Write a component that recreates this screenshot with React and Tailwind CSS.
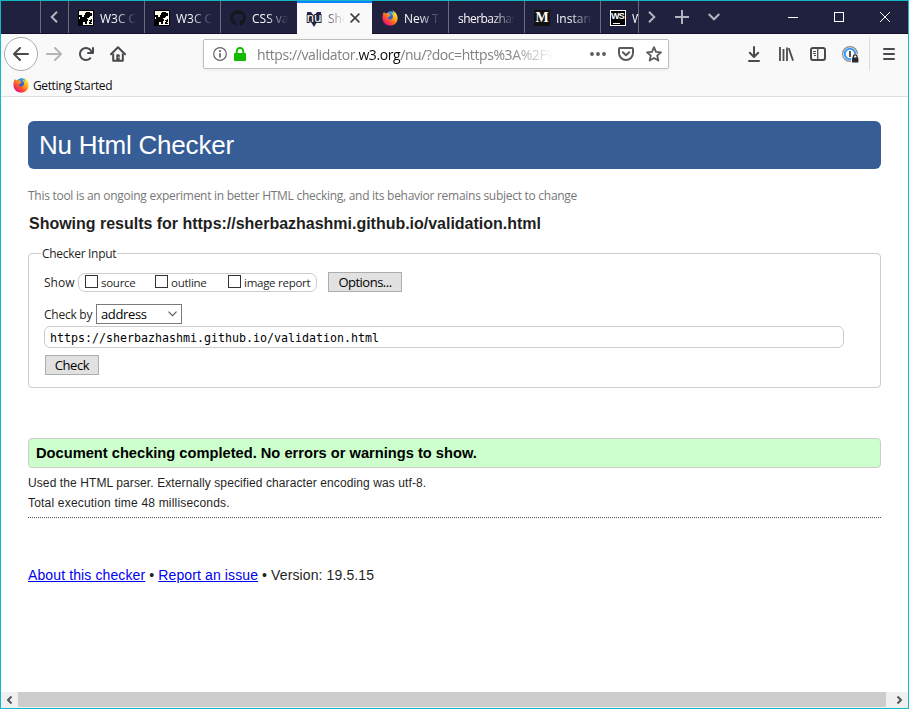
import React from "react";
import { FaGithub } from "react-icons/fa";

const UI = "font-['Open_Sans','Noto_Sans',sans-serif]";

function FirefoxLogo({ id }) {
  return (
    <svg width="16" height="16" viewBox="0 0 16 16" className="shrink-0">
      <defs>
        <linearGradient id={id} x1="0.9" y1="0.1" x2="0.2" y2="0.9">
          <stop offset="0" stopColor="#fff14a" />
          <stop offset="0.35" stopColor="#ffb01c" />
          <stop offset="0.65" stopColor="#ff5a2a" />
          <stop offset="1" stopColor="#e8107a" />
        </linearGradient>
      </defs>
      <circle cx="8.3" cy="7.6" r="6" fill="#2f5fd6" />
      <path d="M7 1.5C9 .8 12 2 13 4L10 5 7 4z" fill="#1d9bf5" />
      <path
        fill={`url(#${id})`}
        d="M1.2 3.2 2.2 1.8C2.4 2.8 2.8 3.2 3.4 3.5 4.2 3.2 5 3.3 5.6 3.6 6 2.9 6.6 2.5 7.3 2.3 6.7 3.2 6.8 4.2 7.3 4.6L8.8 4.9C8.8 5.6 8 5.9 7.5 6.2 7.2 6.8 6.5 7 6 7.2 5.9 8.8 7.2 9.8 8.6 9.5 10.6 9.2 11.2 7.4 10.8 5.6 10.4 4 9.8 3 9.2 2.4 10.6 2.6 11.4 3.4 12 4.2 11.8 2.6 11 1.4 10 .6 12.8 1.2 15.6 4.4 15.6 8.2 15.6 12.4 12.4 15.6 8.2 15.6 4 15.6.6 12.4.5 8.2.4 6.2.8 4.6 1.2 3.2z"
      />
    </svg>
  );
}

function W3CIcon() {
  return (
    <svg width="16" height="16" viewBox="0 0 16 16" className="shrink-0" shapeRendering="crispEdges">
      <rect width="16" height="16" fill="#000" />
      <rect x="1" y="1" width="14" height="14" fill="#fdfbf0" />
      <path
        fill="#000"
        d="M1 5h3v2h2V5h1V3h1V2h4v1h2v3h-2v1h-1v1H9v1h1v2H9v3H7v-2H5v3H1V9h1V7H1zM11 10h2v-1h1v3h-1v1h1v1h-3v-2h1v-1h-1z"
      />
    </svg>
  );
}

function Label({ children, className = "" }) {
  return (
    <span
      className={`ml-[6px] w-[37px] shrink-0 overflow-hidden whitespace-nowrap pt-px text-[12px] leading-[16px] [mask-image:linear-gradient(to_right,black_40%,transparent_98%)] ${className}`}
    >
      {children}
    </span>
  );
}

function Tab({ children, className = "" }) {
  return <div className={`flex h-full shrink-0 items-center overflow-hidden pt-[2px] ${className}`}>{children}</div>;
}

function TabStrip() {
  const sep = "border-l border-[#6b6b7e]";
  return (
    <div className="flex h-[33px] shrink-0 items-center border-b border-[#1a0f2c] bg-[#20213f] text-[#f9f9fa]">
      <div className="w-[39px] shrink-0" />
      <div className={`flex h-full w-[28px] shrink-0 items-center justify-center pr-px ${sep}`}>
        <svg width="8" height="12" viewBox="0 0 8 12" fill="none" stroke="#b4b4bf" strokeWidth="2">
          <path d="M7 .7 1.7 6 7 11.3" />
        </svg>
      </div>
      <Tab className={`w-[76px] pl-[9px] ${sep}`}><W3CIcon /><Label>W3C CSS</Label></Tab>
      <Tab className={`w-[76px] pl-[9px] ${sep}`}><W3CIcon /><Label>W3C CSS</Label></Tab>
      <Tab className={`w-[77px] pl-[9px] ${sep}`}>
        <FaGithub size={16} color="#15161c" className="shrink-0" />
        <Label>CSS valid</Label>
      </Tab>
      <div className="flex h-[33px] w-[75px] shrink-0 items-center self-start border-t-2 border-[#0a84ff] bg-[#f9f9fa] pl-[9px]">
        <svg width="16" height="16" viewBox="0 0 16 16" className="shrink-0">
          <path d="M1 1h4l3 4 3-4h4v8l-4 2-3 5-3-5-4-2z" fill="#29235c" />
          <text x="8" y="10.6" textAnchor="middle" fontFamily="DejaVu Sans" fontSize="12" fill="#fff" stroke="#22222c" strokeWidth="1.8" paintOrder="stroke">nu</text>
        </svg>
        <span className="ml-[6px] w-[17px] shrink-0 overflow-hidden whitespace-nowrap text-[12px] leading-[16px] text-[#55555b] [mask-image:linear-gradient(to_right,black,transparent)]">
          Showing
        </span>
        <svg width="10" height="10" viewBox="0 0 10 10" stroke="#3d3d42" strokeWidth="1.6" className="mb-px ml-[5px] shrink-0">
          <path d="M.6.6 9.4 9.4M9.4.6.6 9.4" />
        </svg>
      </div>
      <Tab className="w-[76px] pl-[10px]"><FirefoxLogo id="ffTab" /><Label>New Tab</Label></Tab>
      <Tab className={`w-[76px] pl-[9px] ${sep}`}>
        <span className="w-[57px] overflow-hidden whitespace-nowrap pt-px text-[12px] leading-[16px] tracking-[-0.55px] [mask-image:linear-gradient(to_right,black_60%,transparent)]">
          sherbazhashmi
        </span>
      </Tab>
      <Tab className={`w-[76px] pl-[9px] ${sep}`}>
        <span className="flex h-[16px] w-[16px] shrink-0 items-center justify-center bg-[#12110f] font-['Liberation_Serif',serif] text-[14px] leading-[16px] font-bold text-white">M</span>
        <Label>Instant</Label>
      </Tab>
      <Tab className={`w-[38px] pl-[9px] ${sep}`}>
        <span className="flex h-[16px] w-[16px] shrink-0 flex-col items-start border border-white bg-black font-['Liberation_Sans',sans-serif] text-[9px] leading-[10px] font-bold tracking-[-0.8px] text-white">
          WS
          <span className="ml-[2px] mt-[2px] h-px w-[7px] bg-white" />
        </span>
        <Label>Web</Label>
      </Tab>
      <div className={`flex h-full w-[28px] shrink-0 items-center justify-center pr-px ${sep}`}>
        <svg width="8" height="12" viewBox="0 0 8 12" fill="none" stroke="#b4b4bf" strokeWidth="2">
          <path d="M1 .7 6.3 6 1 11.3" />
        </svg>
      </div>
      <svg width="14" height="14" viewBox="0 0 14 14" stroke="#b4b4bf" strokeWidth="2" className="ml-[9px] shrink-0">
        <path d="M0 7H14M7 0V14" />
      </svg>
      <svg width="12" height="8" viewBox="0 0 12 8" fill="none" stroke="#b4b4bf" strokeWidth="2" className="ml-[19px] shrink-0">
        <path d="M.7 1 6 6.3 11.3 1" />
      </svg>
      <div className="ml-[68px] h-px w-[10px] shrink-0 bg-white" />
      <div className="ml-[36px] h-[10px] w-[10px] shrink-0 border border-white" />
      <svg width="10" height="10" viewBox="0 0 10 10" stroke="#fff" strokeWidth="1" className="ml-[36px] shrink-0">
        <path d="M0 0 10 10M10 0 0 10" />
      </svg>
    </div>
  );
}

function UrlBar() {
  return (
    <div className="ml-[77px] flex h-[30px] w-[466px] shrink-0 items-center rounded-[2px] border border-[#bebebe] bg-white pl-[9px] shadow-[0_1px_4px_rgba(0,0,0,0.06)]">
      <svg width="14" height="14" viewBox="0 0 14 14" className="shrink-0">
        <circle cx="7" cy="7" r="6.3" fill="none" stroke="#66666a" strokeWidth="1.2" />
        <path d="M7 6.2V10.6" stroke="#66666a" strokeWidth="1.8" />
        <circle cx="7" cy="4.1" r="1.1" fill="#66666a" />
      </svg>
      <svg width="12" height="14" viewBox="0 0 12 14" className="ml-[7px] shrink-0">
        <path d="M2.7 6V4.2a3.3 3.3 0 0 1 6.6 0V6" fill="none" stroke="#12bc00" strokeWidth="2" />
        <rect y="6" width="12" height="8" rx="1" fill="#12bc00" />
      </svg>
      <span className="ml-[11px] w-[297px] shrink-0 overflow-hidden whitespace-nowrap pt-[2px] text-[14px] leading-[20px] tracking-[-0.41px] text-[#808084] [mask-image:linear-gradient(to_right,black_85%,transparent)]">
        https://validator.<span className="text-[#0c0c0d]">w3.org</span>/nu/?doc=https%3A%2F%2Fsherbaz
      </span>
      <svg width="16" height="4" viewBox="0 0 16 4" fill="#5a5a5e" className="ml-[36px] shrink-0">
        <circle cx="2" cy="2" r="1.9" /><circle cx="8" cy="2" r="1.9" /><circle cx="14" cy="2" r="1.9" />
      </svg>
      <svg width="16" height="14" viewBox="0 0 16 14" fill="none" stroke="#5a5a5e" strokeWidth="2" strokeLinejoin="round" strokeLinecap="round" className="ml-[12px] shrink-0">
        <path d="M2 1H14Q15 1 15 2V6A7 7 0 0 1 1 6V2Q1 1 2 1z" />
        <path d="M4.8 5.2 8 8.2 11.2 5.2" />
      </svg>
      <svg width="16" height="16" viewBox="0 0 16 16" fill="none" stroke="#5a5a5e" strokeWidth="1.8" strokeLinejoin="round" className="ml-[12px] shrink-0">
        <path d="M8 1.2 10 5.8 15 6.3 11.2 9.6 12.4 14.6 8 12 3.6 14.6 4.8 9.6 1 6.3 6 5.8z" />
      </svg>
    </div>
  );
}

function Toolbar() {
  return (
    <div className="flex h-[40px] shrink-0 items-center pl-[3px]">
      <div className="flex h-[34px] w-[34px] shrink-0 items-center justify-center rounded-full border border-[#ababad] bg-white">
        <svg width="16" height="16" viewBox="0 0 16 16" fill="#4a4a4e">
          <path d="M15 7H3.414l4.293-4.293a1 1 0 0 0-1.414-1.414l-6 6a1 1 0 0 0 0 1.414l6 6a1 1 0 0 0 1.414-1.414L3.414 9H15a1 1 0 0 0 0-2z" />
        </svg>
      </div>
      <svg width="16" height="16" viewBox="0 0 16 16" fill="#b5b5b7" className="ml-[8px] shrink-0">
        <path transform="matrix(-1 0 0 1 16 0)" d="M15 7H3.414l4.293-4.293a1 1 0 0 0-1.414-1.414l-6 6a1 1 0 0 0 0 1.414l6 6a1 1 0 0 0 1.414-1.414L3.414 9H15a1 1 0 0 0 0-2z" />
      </svg>
      <svg width="16" height="16" viewBox="0 0 16 16" fill="#4a4a4e" className="ml-[16px] shrink-0">
        <path d="M15 1a1 1 0 0 0-1 1v2.418A6.995 6.995 0 1 0 8 15a6.954 6.954 0 0 0 4.95-2.05 1 1 0 0 0-1.414-1.414A5.019 5.019 0 1 1 12.549 6H10a1 1 0 0 0 0 2h5a1 1 0 0 0 1-1V2a1 1 0 0 0-1-1z" />
      </svg>
      <svg width="16" height="16" viewBox="0 0 16 16" className="ml-[16px] shrink-0">
        <path d="M1 8.2 8 1.2 15 8.2" fill="none" stroke="#4a4a4e" strokeWidth="2" strokeLinecap="round" strokeLinejoin="round" />
        <path d="M3.2 7.5V14.8H12.8V7.5" fill="none" stroke="#4a4a4e" strokeWidth="2" strokeLinejoin="round" />
        <path d="M6.3 15V9.3Q6.3 8.3 7.3 8.3H8.7Q9.7 8.3 9.7 9.3V15z" fill="#4a4a4e" />
        <circle cx="8.7" cy="11.3" r=".6" fill="#fff" />
      </svg>
      <UrlBar />
      <svg width="14" height="16" viewBox="0 0 14 16" fill="none" stroke="#4a4a4e" strokeWidth="2" strokeLinecap="round" strokeLinejoin="round" className="ml-[78px] shrink-0">
        <path d="M7 1V10.5M2.8 6.8 7 11 11.2 6.8M2 15H12" />
      </svg>
      <svg width="16" height="16" viewBox="0 0 16 16" fill="none" stroke="#4a4a4e" className="ml-[17px] shrink-0">
        <path d="M2 1V15M5.5 3V15M9 1.5V15M10.8 2.2 15 14.6" strokeWidth="1.8" />
      </svg>
      <svg width="16" height="14" viewBox="0 0 16 14" fill="none" stroke="#4a4a4e" className="ml-[16px] shrink-0">
        <rect x="1" y="1" width="14" height="12" rx="2" strokeWidth="2" />
        <path d="M7.7 1V13" strokeWidth="1.3" />
        <path d="M3 4.5H6M3 6.5H6M4 8.5H6" strokeWidth="1" />
      </svg>
      <svg width="17" height="17" viewBox="0 0 17 17" className="ml-[16px] shrink-0">
        <circle cx="8" cy="8" r="7.4" fill="none" stroke="#8a8a90" strokeWidth="1.2" />
        <circle cx="8" cy="8" r="5.2" fill="#fff" stroke="#3c9cf5" strokeWidth="2" />
        <path d="M8 5V11" stroke="#55555a" strokeWidth="2" />
        <rect x="9" y="8.2" width="8" height="9" fill="#f9f9fa" />
        <rect x="10" y="11.5" width="6.4" height="5" rx=".6" fill="#2a2a2e" />
        <path d="M11.4 12V10.6a1.8 1.8 0 0 1 3.6 0V12" fill="none" stroke="#2a2a2e" strokeWidth="1.3" />
      </svg>
      <div className="ml-[10px] h-[34px] w-px shrink-0 bg-[#dcdcdd]" />
      <div className="ml-[13px] flex w-[12px] shrink-0 flex-col gap-[3px]">
        <div className="h-[2px] rounded-full bg-[#4a4a4e]" />
        <div className="h-[2px] rounded-full bg-[#4a4a4e]" />
        <div className="h-[2px] rounded-full bg-[#4a4a4e]" />
      </div>
    </div>
  );
}

function Check({ label, className }) {
  return (
    <span className={`flex items-center ${className}`}>
      <span className="h-[13px] w-[13px] shrink-0 border border-[#333] bg-white" />
      <span className="ml-[3px] pt-px text-[11.5px] leading-[15px] tracking-[-0.27px] whitespace-nowrap">{label}</span>
    </span>
  );
}

function CheckerForm() {
  return (
    <fieldset className={`mt-[12px] h-[142px] w-[853px] rounded-[4px] border border-[#ccc] pl-[15px] text-[#1f1f1f] ${UI}`}>
      <legend className="ml-[-3px] h-[15px] pr-px pl-px text-[12px] leading-[16px] tracking-[-0.3px] whitespace-nowrap">Checker Input</legend>
      <div className="mt-[11px] flex h-[20px] items-center">
        <span className="w-[34px] pt-[2px] text-[12px] leading-[20px]">Show</span>
        <div className="flex h-[19px] w-[239px] items-start rounded-[7px] border border-[#ccc] pl-[6px]">
          <Check label="source" className="w-[70px]" />
          <Check label="outline" className="w-[73px]" />
          <Check label="image report" className="" />
        </div>
        <button className="ml-[11px] h-[20px] w-[74px] border border-[#adadad] bg-[#e1e1e1] text-[13px] leading-[18px] tracking-[-0.5px] text-black">Options...</button>
      </div>
      <div className="mt-[12px] flex h-[20px] items-center">
        <span className="w-[52px] pt-[2px] text-[12px] leading-[20px] tracking-[-0.25px] whitespace-nowrap">Check by</span>
        <div className="flex h-[20px] w-[86px] items-center justify-between border border-[#7a7a7a] bg-white pr-[4px] pl-[4px] text-[13px] leading-[18px] tracking-[-0.35px] text-black">
          address
          <svg width="9" height="6" viewBox="0 0 9 6" fill="none" stroke="#555" strokeWidth="1.1"><path d="M.5.7 4.5 4.7 8.5.7" /></svg>
        </div>
      </div>
      <div className="mt-[2px] flex h-[22px] w-[800px] items-center rounded-[6px] border border-[#ccc] bg-white pt-[2px] pl-[5px] font-['DejaVu_Sans_Mono',monospace] text-[11.63px] leading-[20px] text-black">
        https://sherbazhashmi.github.io/validation.html
      </div>
      <button className="mt-[7px] ml-px block h-[20px] w-[54px] border border-[#adadad] bg-[#e1e1e1] text-[13px] leading-[18px] tracking-[-0.4px] text-black">Check</button>
    </fieldset>
  );
}

export default function App() {
  return (
    <div className={`flex h-[709px] w-[909px] flex-col overflow-hidden border border-[#14b8c4] bg-white ${UI}`}>
      <TabStrip />
      <div className="flex h-[63px] shrink-0 flex-col border-b border-[#e0e0e1] bg-[#f9f9fa]">
        <Toolbar />
        <div className="flex h-[22px] items-center pl-[12px]">
          <FirefoxLogo id="ffMark" />
          <span className="ml-[4px] pt-px text-[12px] leading-[16px] tracking-[-0.38px] text-[#0c0c0d]">Getting Started</span>
        </div>
      </div>
      <main className="flex-1 overflow-hidden px-[27px] pt-[24px] font-['Liberation_Sans',Arial,sans-serif] text-[#1f1f1f]">
        <h1 className="h-[48px] w-[853px] rounded-[6px] bg-[#365d95] pl-[11px] text-[26px] leading-[48px] tracking-[-0.2px] text-white">Nu Html Checker</h1>
        <p className={`mt-[19px] text-[12px] leading-[16px] tracking-[-0.276px] whitespace-nowrap text-[#777] ${UI}`}>
          This tool is an ongoing experiment in better HTML checking, and its behavior remains subject to change
        </p>
        <h2 className="mt-[10px] pl-px text-[16px] leading-[20px] font-bold tracking-[-0.015px] whitespace-nowrap">
          Showing results for https://sherbazhashmi.github.io/validation.html
        </h2>
        <CheckerForm />
        <p className="mt-[50px] h-[30px] w-[853px] rounded-[4px] border border-[#ccc] bg-[#ccffcc] pl-[7px] text-[14.67px] leading-[28px] font-bold text-black">
          Document checking completed. No errors or warnings to show.
        </p>
        <div className="w-[853px] border-b border-dotted border-[#555] pt-[5px] pb-[4px] text-[12px] leading-[20px]">
          <p className="tracking-[0.1px]">Used the HTML parser. Externally specified character encoding was utf-8.</p>
          <p className="tracking-[0.19px]">Total execution time 48 milliseconds.</p>
        </div>
        <p className="mt-[47px] text-[14px] leading-[20px] tracking-[0.115px]">
          <a className="text-[#0000ee] underline">About this checker</a> • <a className="text-[#0000ee] underline">Report an issue</a> • Version: 19.5.15
        </p>
      </main>
      <div className="flex h-[16px] shrink-0 items-center bg-[#f0f0f0]">
        <svg width="17" height="16" viewBox="0 0 17 16" fill="none" stroke="#555" strokeWidth="2"><path d="M10.5 4.5 7 8 10.5 11.5" /></svg>
        <div className="h-[15px] w-[868px] self-start bg-[#cdcdcd]" />
        <svg width="22" height="16" viewBox="0 0 22 16" fill="none" stroke="#555" strokeWidth="2"><path d="M11.5 4.5 15 8 11.5 11.5" /></svg>
      </div>
    </div>
  );
}
